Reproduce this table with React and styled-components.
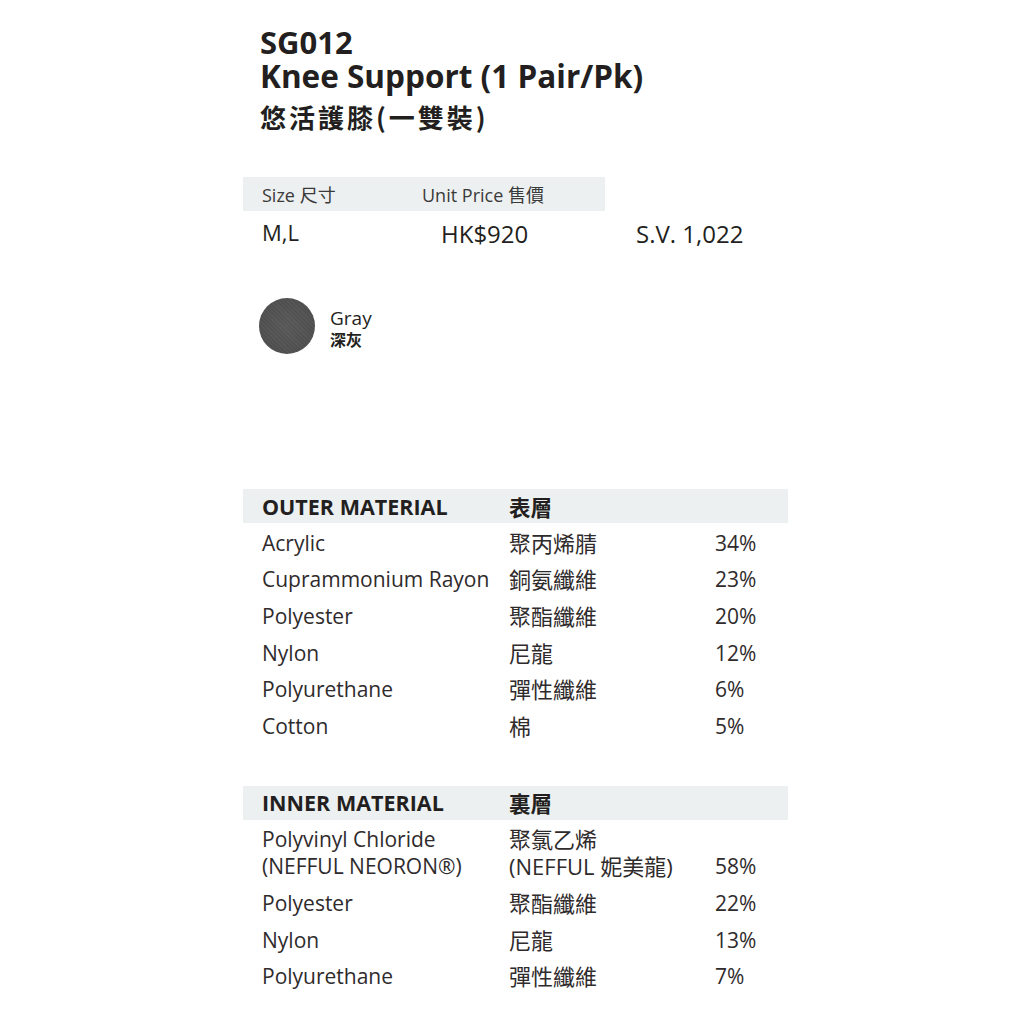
import React from "react";
import styled, { createGlobalStyle } from "styled-components";

const outer = [
  ["Acrylic", "聚丙烯腈", "34%"],
  ["Cuprammonium Rayon", "銅氨纖維", "23%"],
  ["Polyester", "聚酯纖維", "20%"],
  ["Nylon", "尼龍", "12%"],
  ["Polyurethane", "彈性纖維", "6%"],
  ["Cotton", "棉", "5%"],
];

const inner = [
  [["Polyvinyl Chloride", "(NEFFUL NEORON®)"], ["聚氯乙烯", "(NEFFUL 妮美龍)"], "58%"],
  [["Polyester"], ["聚酯纖維"], "22%"],
  [["Nylon"], ["尼龍"], "13%"],
  [["Polyurethane"], ["彈性纖維"], "7%"],
];

function MaterialTable({ title, zh, rows, top }) {
  return (
    <Table $top={top}>
      <TableHead>
        <span>{title}</span>
        <span>{zh}</span>
        <span />
      </TableHead>
      <TableBody>
        {rows.map((r, i) => {
          const en = Array.isArray(r[0]) ? r[0] : [r[0]];
          const cn = Array.isArray(r[1]) ? r[1] : [r[1]];
          return (
            <Row key={i}>
              <Cell>{en.map((l) => <div key={l}>{l}</div>)}</Cell>
              <ZhCell>{cn.map((l) => <div key={l}>{l}</div>)}</ZhCell>
              <Percent>{r[2]}</Percent>
            </Row>
          );
        })}
      </TableBody>
    </Table>
  );
}

export default function App() {
  return (
    <>
      <Global />
      <Page>
        <TitleBlock>
          <Code>SG012</Code>
          <Name>Knee Support (1 Pair/Pk)</Name>
          <NameZh>悠活護膝(一雙裝)</NameZh>
        </TitleBlock>

        <PriceHead>
          <span>Size 尺寸</span>
          <span>Unit Price 售價</span>
        </PriceHead>
        <PriceRow>
          <Size>M,L</Size>
          <Price>HK$920</Price>
          <Price>S.V. 1,022</Price>
        </PriceRow>

        <Swatch>
          <Dot />
          <SwatchText>
            <SwatchEn>Gray</SwatchEn>
            <SwatchZh>深灰</SwatchZh>
          </SwatchText>
        </Swatch>

        <MaterialTable title="OUTER MATERIAL" zh="表層" rows={outer} top={135} />
        <MaterialTable title="INNER MATERIAL" zh="裏層" rows={inner} top={41} />
      </Page>
    </>
  );
}

/* ---------------- styles ---------------- */

const Global = createGlobalStyle`
  body {
    margin: 0;
    background: #fff;
    color: #231f20;
    font-family: "Open Sans", "Noto Sans CJK TC", sans-serif;
  }
`;

const Page = styled.main`
  width: 545px;
  margin-left: 243px;
  padding-top: 25px;
  padding-bottom: 30px;
`;

const TitleBlock = styled.div`
  padding-left: 17px;
  font-weight: 700;
`;

const Code = styled.div`
  font-size: 31px;
  line-height: 34px;
`;

const Name = styled.div`
  font-size: 31.5px;
  line-height: 34px;
`;

const NameZh = styled.div`
  font-family: "Noto Sans CJK TC", sans-serif;
  font-size: 26px;
  line-height: 32px;
  letter-spacing: 3px;
  margin-top: 8px;
`;

const PriceHead = styled.div`
  margin-top: 44px;
  width: 362px;
  height: 34px;
  background: #edf0f1;
  display: grid;
  grid-template-columns: 160px 1fr;
  align-items: center;
  padding-left: 19px;
  box-sizing: border-box;
  font-size: 18px;
  color: #3a3a3a;
`;

const PriceRow = styled.div`
  display: grid;
  grid-template-columns: 179px 195px 1fr;
  padding-left: 19px;
  height: 44px;
  align-items: center;
`;

const Size = styled.span`
  font-size: 22px;
  margin-top: -3px;
`;

const Price = styled.span`
  font-size: 24px;
`;

const Swatch = styled.div`
  display: flex;
  align-items: center;
  gap: 15px;
  margin-top: 43px;
  padding-left: 16px;
`;

const Dot = styled.div`
  width: 56px;
  height: 56px;
  border-radius: 50%;
  background:
    repeating-linear-gradient(45deg, rgba(255,255,255,0.04) 0 1px, transparent 1px 3px),
    radial-gradient(circle at 50% 50%, #585858, #4a4a4a);
`;

const SwatchText = styled.div`
  display: flex;
  flex-direction: column;
  margin-top: 4px;
`;

const SwatchEn = styled.span`
  font-size: 19px;
  line-height: 22px;
`;

const SwatchZh = styled.span`
  font-family: "Noto Sans CJK TC", sans-serif;
  font-size: 16px;
  font-weight: 700;
  line-height: 20px;
`;

const Table = styled.section`
  margin-top: ${(p) => p.$top}px;
`;

const TableHead = styled.div`
  display: grid;
  grid-template-columns: 247px 206px 1fr;
  align-items: center;
  height: 34px;
  padding-left: 19px;
  background: #edf0f1;
  font-size: 21.5px;
  font-weight: 700;
`;

const TableBody = styled.div`
  padding-top: 2px;
`;

const Row = styled.div`
  display: grid;
  grid-template-columns: 247px 206px 1fr;
  padding: 4.8px 0 4.8px 19px;
  font-size: 21px;
  line-height: 27px;
  color: #2f2b2c;
`;

const Cell = styled.div``;

const ZhCell = styled.div`
  font-size: 22px;
`;

const Percent = styled.div`
  align-self: end;
`;
